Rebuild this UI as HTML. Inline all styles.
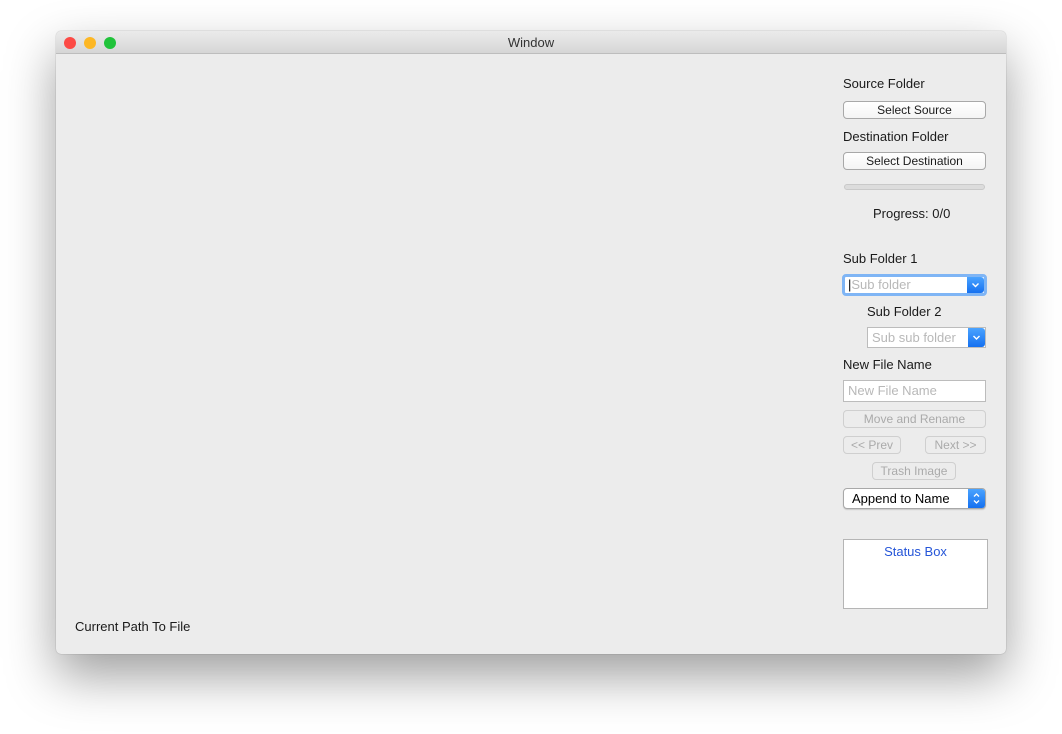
<!DOCTYPE html>
<html><head><style>
body{margin:0;width:1062px;height:734px;background:#fff;position:relative;overflow:hidden;font-family:"Liberation Sans",sans-serif;font-size:13px;color:#1a1a1a}
.win{position:absolute;left:56px;top:31px;width:950px;height:623px;background:#ececec;border-radius:5px;box-shadow:0 22px 50px rgba(0,0,0,.38),0 0 1px rgba(0,0,0,.4);overflow:hidden}
.tb{position:absolute;left:0;top:0;width:950px;height:22px;background:linear-gradient(#ebebeb,#d6d6d6);border-bottom:1px solid #bdbdbd;text-align:center;line-height:23px;font-size:13px;color:#333}
.dot{position:absolute;top:6px;width:12px;height:12px;border-radius:50%}
.a{position:absolute;white-space:nowrap}
.btn{position:absolute;height:16px;border:1px solid #a8a8a8;border-radius:4px;background:linear-gradient(#fff,#f4f4f4);text-align:center;line-height:16px;font-size:12px;box-sizing:content-box}
.dis{border-color:#cfcfcf;background:#ececec;color:#aaa}
.field{position:absolute;background:#fff;border:1px solid #bcbcbc;color:#b8b8b8;line-height:20px;padding-left:4px;box-sizing:border-box}
.arr{position:absolute;right:0;top:0;bottom:0;width:17px;background:linear-gradient(#4aa3ff,#1570f0);border-radius:0 3px 3px 0}
</style></head><body>
<div class="win">
<div class="tb">Window
<div class="dot" style="left:8px;background:#fc4a45"></div>
<div class="dot" style="left:28px;background:#fdb724"></div>
<div class="dot" style="left:48px;background:#20c33a"></div>
</div>
<div class="a" style="left:787px;top:45px">Source Folder</div>
<div class="btn" style="left:787px;top:70px;width:141px">Select Source</div>
<div class="a" style="left:787px;top:98px">Destination Folder</div>
<div class="btn" style="left:787px;top:121px;width:141px">Select Destination</div>
<div class="a" style="left:788px;top:153px;width:141px;height:6px;background:#dcdcdc;border:1px solid #c9c9c9;border-radius:4px;box-sizing:border-box"></div>
<div class="a" style="left:817px;top:175px">Progress: 0/0</div>
<div class="a" style="left:787px;top:220px">Sub Folder 1</div>
<div class="field" style="left:786px;top:243px;width:145px;height:22px;border:3px solid #7fb5f5;border-radius:4px;line-height:16px;padding-left:3px;font-size:13px"><span style="color:#000">|</span>Sub folder<div class="arr"><svg width="17" height="16"><path d="M5.5 6.5l3 3 3-3" fill="none" stroke="#fff" stroke-width="1.4"/></svg></div></div>
<div class="a" style="left:811px;top:273px">Sub Folder 2</div>
<div class="field" style="left:811px;top:296px;width:119px;height:21px;line-height:19px">Sub sub folder<div class="arr"><svg width="17" height="19"><path d="M5.5 8l3 3 3-3" fill="none" stroke="#fff" stroke-width="1.4"/></svg></div></div>
<div class="a" style="left:787px;top:326px">New File Name</div>
<div class="field" style="left:787px;top:349px;width:143px;height:22px">New File Name</div>
<div class="btn dis" style="left:787px;top:379px;width:141px">Move and Rename</div>
<div class="btn dis" style="left:787px;top:405px;width:56px">&lt;&lt; Prev</div>
<div class="btn dis" style="left:869px;top:405px;width:59px">Next &gt;&gt;</div>
<div class="btn dis" style="left:816px;top:431px;width:82px">Trash Image</div>
<div class="btn" style="left:787px;top:457px;height:19px;line-height:19px;text-align:left;padding-left:8px;width:133px;font-size:13px;color:#000;background:#fff;box-shadow:0 1px 1px rgba(0,0,0,.15)">Append to Name<div class="arr"><svg width="17" height="19"><path d="M6 7.5l2.5-2.5 2.5 2.5M6 11.5l2.5 2.5 2.5-2.5" fill="none" stroke="#fff" stroke-width="1.3"/></svg></div></div>
<div class="a" style="left:787px;top:508px;width:145px;height:70px;background:#fff;border:1px solid #b5b5b5;box-sizing:border-box;text-align:center;color:#2555d8;padding-top:4px">Status Box</div>
<div class="a" style="left:19px;top:588px">Current Path To File</div>
</div>
</body></html>
